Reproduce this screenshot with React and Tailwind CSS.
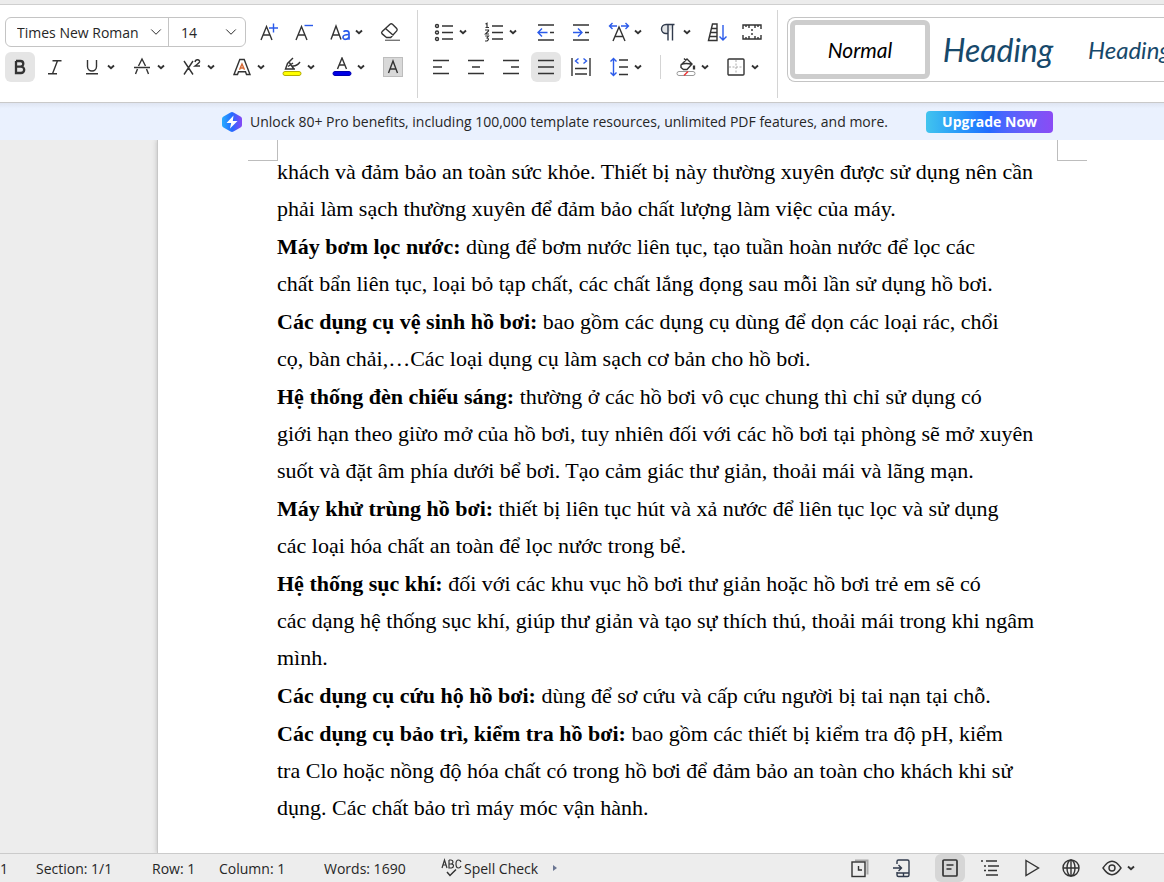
import { ChevronDown } from "lucide-react";

const ink = "#333333";
const blue = "#2b5bea";

function Icon({ w = 20, h = 20, children, label }) {
  return (
    <svg width={w} height={h} viewBox={`0 0 ${w} ${h}`} fill="none" stroke={ink} strokeWidth="1.4" className="shrink-0" role="img" aria-label={label}>
      {children}
    </svg>
  );
}

function Caret() {
  return (
    <svg width="8" height="6" viewBox="0 0 8 6" fill="none" stroke={ink} strokeWidth="1.9" className="shrink-0" aria-hidden="true">
      <path d="M1 1.5 4 4.2 7 1.5" />
    </svg>
  );
}

function Tool({ className = "", children, active, label, caret }) {
  return (
    <button type="button" aria-label={label} className={`flex h-[30px] shrink-0 items-center ${caret ? "w-[50px] gap-[5px] pl-[7px]" : "w-[30px] justify-center"} ${active ? "rounded-md bg-[#e5e5e5]" : ""} ${className}`}>
      {caret ? <span className="flex w-5 shrink-0 justify-center">{children}</span> : children}
      {caret && <Caret />}
    </button>
  );
}

const paragraphs = [
  { lines: ["khách và đảm bảo an toàn sức khỏe. Thiết bị này thường xuyên được sử dụng nên cần", "phải làm sạch thường xuyên để đảm bảo chất lượng làm việc của máy."] },
  { title: "Máy bơm lọc nước:", lines: ["dùng để bơm nước liên tục, tạo tuần hoàn nước để lọc các", "chất bẩn liên tục, loại bỏ tạp chất, các chất lắng đọng sau mỗi lần sử dụng hồ bơi."] },
  { title: "Các dụng cụ vệ sinh hồ bơi:", lines: ["bao gồm các dụng cụ dùng để dọn các loại rác, chổi", "cọ, bàn chải,…Các loại dụng cụ làm sạch cơ bản cho hồ bơi."] },
  { title: "Hệ thống đèn chiếu sáng:", lines: ["thường ở các hồ bơi vô cục chung thì chỉ sử dụng có", "giới hạn theo giừo mở của hồ bơi, tuy nhiên đối với các hồ bơi tại phòng sẽ mở xuyên", "suốt và đặt âm phía dưới bể bơi. Tạo cảm giác thư giản, thoải mái và lãng mạn."] },
  { title: "Máy khử trùng hồ bơi:", lines: ["thiết bị liên tục hút và xả nước để liên tục lọc và sử dụng", "các loại hóa chất an toàn để lọc nước trong bể."] },
  { title: "Hệ thống sục khí:", lines: ["đối với các khu vục hồ bơi thư giản hoặc hồ bơi trẻ em sẽ có", "các dạng hệ thống sục khí, giúp thư giản và tạo sự thích thú, thoải mái trong khi ngâm", "mình."] },
  { title: "Các dụng cụ cứu hộ hồ bơi:", lines: ["dùng để sơ cứu và cấp cứu người bị tai nạn tại chỗ."] },
  { title: "Các dụng cụ bảo trì, kiểm tra hồ bơi:", lines: ["bao gồm các thiết bị kiểm tra độ pH, kiểm", "tra Clo hoặc nồng độ hóa chất có trong hồ bơi để đảm bảo an toàn cho khách khi sử", "dụng. Các chất bảo trì máy móc vận hành."] },
];

function FontControls() {
  return (
    <div className="flex w-[418px] shrink-0 flex-col gap-[5px] border-r border-[#d4d4d4] pt-[7px] pl-[5px]">
      <div className="flex h-[30px] items-center">
        <div className="flex h-[30px] w-[241px] shrink-0 items-center rounded-md border border-[#c4c4c4] text-[14px]">
          <div className="relative flex h-full w-[163px] items-center border-r border-[#c4c4c4]">
            <select aria-label="Font" className="h-full w-full appearance-none bg-transparent pl-[11px] outline-none">
              <option>Times New Roman</option>
            </select>
            <ChevronDown size={18} strokeWidth={1.3} className="pointer-events-none absolute right-[3px]" />
          </div>
          <div className="relative flex h-full flex-1 items-center">
            <select aria-label="Font size" className="h-full w-full appearance-none bg-transparent pl-3 outline-none">
              <option>14</option>
            </select>
            <ChevronDown size={18} strokeWidth={1.3} className="pointer-events-none absolute right-[5px]" />
          </div>
        </div>
        <Tool label="Increase font size" className="ml-2">
          <Icon><path d="M2 18 7.5 4.500 13 18M4 13h7" /><path stroke={blue} d="M10 6h9M14.500 1.500v9" /></Icon>
        </Tool>
        <Tool label="Decrease font size" className="ml-[5px]">
          <Icon><path d="M2 18 7.500 4.500 13 18M4 13h7" /><path stroke={blue} d="M10.500 3.500H19" /></Icon>
        </Tool>
        <Tool label="Change case" caret className="ml-1">
          <Icon w={21}><path d="M1 17.500 6 4l5 13.500M3 13h6" /><g stroke={blue} strokeWidth="1.7"><path d="M13.500 9.700c1-1.200 5.500-1.500 5.500 1.500v6.500" /><path d="M19 12.500c-3.500 0-6 .3-6 2.700 0 3 5 2.700 6-.5" /></g></Icon>
        </Tool>
        <Tool label="Clear formatting" className="ml-[2px]">
          <Icon><path d="m6.500 15.500-4.300-3.600q-1.200-1.200 0-2.500L10 2.200q1.200-1 2.500 0l4.200 4.200q1 1.200 0 2.500l-6 6.600zM5.500 6.500l8 7" /><path stroke="#777" d="M5 18.300h15" /></Icon>
        </Tool>
      </div>
      <div className="flex h-[30px] items-center">
        <Tool label="Bold" active><Icon w={14} h={16}><path strokeWidth="2.300" d="M3 2v12h5a3.200 3.200 0 0 0 0-6.400H3m0 0h4.500a2.800 2.800 0 0 0 0-5.600H3" /></Icon></Tool>
        <Tool label="Italic" className="ml-[5px]"><Icon w={16} h={16}><path d="M5.500 1.700h9M1 14.800h9M10.500 1.700 5.500 14.800" /></Icon></Tool>
        <Tool label="Underline" caret className="ml-[5px]"><Icon w={14} h={16}><path d="M2.500 1v6.500a4.500 4.500 0 0 0 9 0V1M1 14.800h12" /></Icon></Tool>
        <Tool label="Strikethrough" caret><Icon w={18}><path d="M1 10.500h16M5.500 9 9 2l3.500 7M4.500 12 2.500 17M13.500 12l2 5" /></Icon></Tool>
        <Tool label="Superscript" caret><Icon><path d="m2 4 9 13.500M11 4 2 17.500M13 5q.5-2.500 2.500-2.300 2.500.3 2 2.300-.5 1-4.500 4h5" /></Icon></Tool>
        <Tool label="Text effects" caret><Icon><path d="M2 17.500 7.800 2.500h4.400L18 17.500h-3.500l-1-2.700H6.500l-1 2.700z" /><path stroke="#d66a35" d="m7.500 12.700 2.500-5.700 2.500 5.700M8.500 11h3" /></Icon></Tool>
        <Tool label="Highlight" caret><Icon><path d="m11 1-5.500 5.500L3.500 12H13M7 5l4.500 6.500M6 9.500l5-3.500M10.500 9q4 .5 7.500-4" /><rect x="1" y="14.500" width="18" height="4" rx="2" fill="#ffff00" stroke="#b5ad00" strokeWidth="1" /></Icon></Tool>
        <Tool label="Font color" caret><Icon><path d="m5.500 12 4.500-11 4.500 11M7 8h6" /><rect x="1" y="14.500" width="18" height="4" rx="2" fill="#0000e6" stroke="#0000b0" strokeWidth="1" /></Icon></Tool>
        <Tool label="Character shading" className="ml-[3px]"><Icon><rect x=".5" y=".5" width="19" height="19" fill="#d9d9d9" stroke="#bdbdbd" strokeWidth="1" /><path d="M5.500 16 10 4l4.500 12M7 12h6" /></Icon></Tool>
      </div>
    </div>
  );
}

function ParagraphControls() {
  return (
    <div className="flex w-[360px] shrink-0 flex-col gap-[5px] border-r border-[#d4d4d4] pt-[7px] pl-2">
      <div className="flex h-[30px] items-center">
        <Tool label="Bullets" caret className="ml-[1px]"><Icon><path d="M8 4h11M8 10.500h11M8 17h11" /><circle cx="3" cy="4" r="1.500" /><circle cx="3" cy="10.500" r="1.500" /><circle cx="3" cy="17" r="1.500" /></Icon></Tool>
        <Tool label="Numbering" caret><Icon><path d="M8 4h11M8 10.500h11M8 17h11" /><path strokeWidth="1.200" d="m1.500 2 1.500-.8v4.300M1.500 5.500h3.500M1 8h3.500v1L1.500 12H5M1.200 14H4.500L3 16q3 1 0 3H1" /></Icon></Tool>
        <Tool label="Decrease indent" className="ml-[4px]"><Icon><path d="M2 3h16M14 10.500h4M2 18h16" /><path stroke={blue} d="M11.500 10.500H2M6 6.500l-4 4 4 4" /></Icon></Tool>
        <Tool label="Increase indent" className="ml-[5px]"><Icon><path d="M2 3h16M14 10.500h4M2 18h16" /><path stroke={blue} d="M2 10.500h9M7 6.500l4 4-4 4" /></Icon></Tool>
        <Tool label="Character scaling" caret className="ml-[6px]"><Icon w={22}><path d="m5 19 6-14 6 14M7 14.500h8" /><path stroke={blue} d="M9 4H1.500M4.500 1l-3 3 3 3M13 4h7.500M17.500 1l3 3-3 3" /></Icon></Tool>
        <Tool label="Paragraph marks" caret className="-ml-px"><Icon w={16}><path d="M8 11.500H6a4.500 4.500 0 0 1 0-9h8.500M8 2.500V18.500M12.500 2.500V18.500" stroke="#303a4c" fill="#303a4c22" /></Icon></Tool>
        <Tool label="Sort" className="ml-[1px]"><Icon w={21}><path d="M1.500 18.500 5.500 2h4.500v16.500zM5 6.500h5M4 10.500h6M3 14.500h7" /><path stroke={blue} d="M16 3v15M12.500 14.500l3.500 3.500 3.500-3.500" /></Icon></Tool>
        <Tool label="Tabs" className="ml-[5px]"><Icon><path d="M1 7V3h18v4M1 13v4h18v-4M7 3v3M13 3v3M7 17v-3M13 17v-3M10 7v2M10 11v2M4 3v2M16 3v2M4 17v-2M16 17v-2" /></Icon></Tool>
      </div>
      <div className="flex h-[30px] items-center">
        <Tool label="Align left"><Icon><path d="M2 3.500h16M2 10h9M2 16.500h16" /></Icon></Tool>
        <Tool label="Center" className="ml-[5px]"><Icon><path d="M2 3.500h16M6 10h8M2 16.500h16" /></Icon></Tool>
        <Tool label="Align right" className="ml-[5px]"><Icon><path d="M2 3.500h16M10 10h8M2 16.500h16" /></Icon></Tool>
        <Tool label="Justify" active className="ml-[5px]"><Icon><path d="M2 3.500h16M2 10h16M2 16.500h16" /></Icon></Tool>
        <Tool label="Distribute" className="ml-[5px]"><Icon><path d="M1 1v18M19 1v18M4 11.500h12M4 17h12" /><path stroke={blue} d="M7.500 1.500 4.500 4l3 2.500M12.500 1.500l3 2.500-3 2.500" /></Icon></Tool>
        <Tool label="Line spacing" caret className="ml-[6px]"><Icon><path d="M10 3h9M10 10h9M10 17.500h9" /><path stroke={blue} d="M4.500 1.500v17M1.500 4.500l3-3 3 3M1.500 15.500l3 3 3-3" /></Icon></Tool>
        <div className="mr-[8px] ml-[8px] h-6 border-l border-[#d4d4d4]" />
        <Tool label="Shading" caret><Icon><path d="m5 8 6-6 5 5-5 5.500H7.500L5 10.500zM8 1.500l2 2M5 7.500q5-2 11 0" /><path d="M18 8.500v4" strokeWidth="2.300" /><rect x="1" y="14.500" width="18" height="4" rx="2" stroke="#999" strokeWidth="1" /><path d="m8 18.500 4-4" stroke="#e33" /></Icon></Tool>
        <Tool label="Borders" caret><Icon><rect x="2" y="2" width="16" height="16" rx="1" /><path stroke="#aaa" strokeWidth="1" strokeDasharray="2 1.500" d="M3 10h14M10 3v14" /></Icon></Tool>
      </div>
    </div>
  );
}

function Status({ label, active, className = "", children }) {
  return <button type="button" aria-label={label} className={`flex h-full w-[30px] shrink-0 items-center justify-center ${active ? "rounded-md bg-[#d6d6d6]" : ""} ${className}`}>{children}</button>;
}

export default function App() {
  return (
    <div className="flex h-screen flex-col overflow-hidden bg-white font-['Open_Sans','Noto_Sans',sans-serif] text-[#262626]">
      <header className="flex h-[103px] shrink-0 overflow-hidden border-t-4 border-b border-t-[#ececec] border-b-[#c9c9c9]">
        <div className="flex min-w-0 flex-1 border-t border-[#cfcfcf] pt-[5px] pb-1">
          <FontControls />
          <ParagraphControls />
          <div className="mt-[7px] ml-[9px] flex h-[65px] min-w-0 flex-1 overflow-hidden rounded-l-lg border border-r-0 border-[#c4c4c4] p-[2px] font-[Lato,sans-serif] italic">
            <button type="button" className="h-[59px] w-[140px] shrink-0 rounded-md border-[5px] border-[#cdcdcd] text-[21px] text-black">Normal</button>
            <button type="button" className="w-[136px] shrink-0 text-[32px] text-[#17496b]">Heading</button>
            <button type="button" className="ml-[22px] shrink-0 text-[24px] text-[#17496b]">Heading 2</button>
          </div>
        </div>
      </header>
      <aside className="flex h-[37px] shrink-0 items-center bg-linear-to-b from-[#dfe5f2] to-[#eaf1fe] to-15% pl-[221px]">
        <svg width="22" height="22" viewBox="0 0 22 22" aria-hidden="true"><defs><linearGradient id="hex"><stop stopColor="#28adff" /><stop offset=".5" stopColor="#246bff" /><stop offset="1" stopColor="#8747f5" /></linearGradient></defs><path fill="url(#hex)" d="M9.500 1.500q1.500-.9 3 0L19.500 5.400Q21 6.200 21 7.700v6.600q0 1.500-1.500 2.300l-7 3.900q-1.500.9-3 0l-7-3.900Q1 15.800 1 14.300V7.700q0-1.500 1.500-2.300z" /><path fill="#fff" d="M12.500 4.500 5.500 12h4.700L9 17.500 16.500 10h-4.700z" /></svg>
        <p className="ml-[7px] text-[14px] whitespace-nowrap">Unlock 80+ Pro benefits, including 100,000 template resources, unlimited PDF features, and more.</p>
        <button type="button" className="ml-[38px] h-[22px] w-[127px] shrink-0 rounded bg-linear-to-r from-[#42c4ee] via-[#246bff] to-[#8a4bf5] text-[14px] leading-[22px] font-bold text-white">Upgrade Now</button>
      </aside>
      <main className="flex min-h-0 flex-1 overflow-hidden bg-[#ededed]">
        <article className="ml-[157px] flex-1 border-l border-[#c8c8c8] bg-white shadow-[0_0_5px_#bbbbbb]">
          <div className="flex justify-between pr-[77px] pl-[90px]" aria-hidden="true"><i className="h-[21px] w-[30px] border-r border-b border-[#bdbdbd]" /><i className="h-[21px] w-[30px] border-b border-l border-[#bdbdbd]" /></div>
          <div className="-mt-2 flex flex-col gap-px pl-[119px] font-['Liberation_Serif',serif] text-[22px] leading-[37px] whitespace-nowrap text-black">
            {paragraphs.map((p, n) => <p key={n}>{p.title && <strong>{p.title} </strong>}{p.lines.map((line, i) => <span key={line}>{i > 0 && <br />}{line}</span>)}</p>)}
          </div>
        </article>
      </main>
      <footer className="flex h-[29px] shrink-0 items-center overflow-hidden border-t border-[#cbcbcb] bg-[#ededed] text-[14px] whitespace-nowrap">
        <span className="w-9 shrink-0">1</span><span className="w-[116px] shrink-0">Section: 1/1</span><span className="w-[67px] shrink-0">Row: 1</span><span className="w-[105px] shrink-0">Column: 1</span><span className="w-[117px] shrink-0">Words: 1690</span>
        <button type="button" className="flex items-center gap-[2px]"><Icon w={21}><g strokeWidth="1.200"><path d="m1 10 2.500-8L6 10M2 7h3M8 2v8h2.500q2-.3 2-2.200T10 6H8m0 0h2q2-.2 2-2t-2-2H8M20 4q-.7-2-2.500-2Q15 2 15 6t2.500 4q1.800 0 2.500-2" /><path strokeWidth="1.500" d="m6 14 3 3.500 6-6" /></g></Icon>Spell Check<svg width="5" height="8" className="ml-[13px]" aria-hidden="true"><path d="m0 1 4 3-4 3z" fill="#6a7592" /></svg></button>
        <div className="ml-auto flex h-full items-center pr-[29px]">
          <Status label="History"><Icon><path stroke="#aaa" strokeWidth="2" d="M5 2.500h12.500v14" /><rect x="2" y="4" width="13" height="14.500" fill="#ededed" /><path d="M8.500 8v4h3.500" /></Icon></Status>
          <Status label="Send to phone" className="ml-3"><Icon><path stroke="#303a4c" d="M5 6V3.500Q5 2 6.500 2h9Q17 2 17 3.500v13.500q0 1.500-1.500 1.500h-9Q5 18.500 5 17v-3M1 10h8.500M6.500 7l3 3-3 3M5 15h12M11.500 15v3" /></Icon></Status>
          <Status label="Page view" active className="ml-[18px]"><Icon><rect x="3" y="2" width="14" height="16" rx="1" strokeWidth="1.700" /><path d="M6.500 7h7M6.500 11h5" /></Icon></Status>
          <Status label="Outline" className="ml-[10px]"><Icon><path d="M1 3h2M6 3h11M4 8h2M8 8h11M4 12.500h2M8 12.500h9M6 17h12" /></Icon></Status>
          <Status label="Play" className="ml-3"><Icon><path d="m4 2.500 12.500 7.500L4 17.500z" /></Icon></Status>
          <Status label="Web view" className="ml-[9px]"><Icon><circle cx="10" cy="10" r="8" /><ellipse cx="10" cy="10" rx="4" ry="8" /><path d="M2 10h16M10 2v16" /></Icon></Status>
          <Status label="View options" className="ml-[11px]"><Icon><path d="M1 10q9-13.500 18 0-9 13.500-18 0z" /><circle cx="10" cy="10" r="3" /></Icon></Status><Caret />
        </div>
      </footer>
    </div>
  );
}
